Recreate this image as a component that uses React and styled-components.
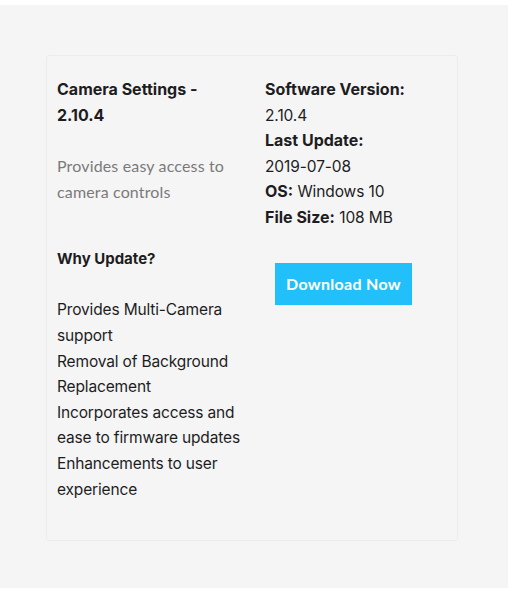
import React from "react";
import styled, { createGlobalStyle } from "styled-components";

const Global = createGlobalStyle`
  html, body { margin: 0; padding: 0; background: #ffffff; }
  body { font-family: Inter, "Liberation Sans", sans-serif; }
`;

const Page = styled.div`
  margin-top: 5px;
  width: 508px;
  height: 583px;
  background: #f5f5f5;
  padding: 50px 0 0 46px;
  box-sizing: border-box;
`;

const Card = styled.div`
  width: 412px;
  box-sizing: border-box;
  border: 1px solid #ececec;
  border-radius: 3px;
  background: #f5f5f5;
  padding: 21px 10px 38px 10px;
  display: grid;
  grid-template-columns: 198px 1fr;
  column-gap: 10px;
`;

const Column = styled.div`
  display: flex;
  flex-direction: column;
  align-items: flex-start;
`;

const Title = styled.h2`
  margin: 0 0 25px 0;
  font-size: 16px;
  line-height: 25.6px;
  font-weight: 700;
  color: #1d1d1f;
  letter-spacing: 0;
`;

const Lead = styled.p`
  margin: 0 0 42px 0;
  font-family: Lato, "Open Sans", sans-serif;
  font-weight: 400;
  font-size: 16px;
  line-height: 25.6px;
  color: #7a7a7a;
  letter-spacing: 0.15px;
`;

const Subhead = styled.h3`
  margin: 0 0 25.5px 0;
  font-size: 15px;
  line-height: 25.6px;
  font-weight: 700;
  color: #1d1d1f;
`;

const Body = styled.p`
  margin: 0;
  font-size: 15.5px;
  line-height: 25.6px;
  letter-spacing: -0.15px;
  color: #1d1d1f;
`;

const Info = styled.div`
  font-size: 15.5px;
  line-height: 25.6px;
  letter-spacing: -0.1px;
  color: #1d1d1f;
  margin-bottom: 32px;
`;

const Label = styled.strong`
  font-weight: 700;
  font-size: 16px;
  letter-spacing: 0;
`;

const Button = styled.button`
  margin-left: 10px;
  width: 137px;
  height: 42px;
  border: none;
  border-radius: 0;
  background: #22c0fa;
  color: #ffffff;
  font-family: Lato, "Open Sans", sans-serif;
  font-weight: 700;
  font-size: 16px;
  letter-spacing: 0.3px;
  cursor: pointer;
  padding: 0;
`;

export default function App() {
  return (
    <>
      <Global />
      <Page>
        <Card>
          <Column>
            <Title>
              Camera Settings -<br />2.10.4
            </Title>
            <Lead>Provides easy access to camera controls</Lead>
            <Subhead>Why Update?</Subhead>
            <Body>
              Provides Multi-Camera support
              <br />
              Removal of Background Replacement
              <br />
              Incorporates access and ease to firmware updates
              <br />
              Enhancements to user experience
            </Body>
          </Column>
          <Column>
            <Info>
              <Label>Software Version:</Label>
              <br />
              2.10.4
              <br />
              <Label>Last Update:</Label>
              <br />
              2019-07-08
              <br />
              <Label>OS:</Label> Windows 10
              <br />
              <Label>File Size:</Label> 108 MB
            </Info>
            <Button>Download Now</Button>
          </Column>
        </Card>
      </Page>
    </>
  );
}
